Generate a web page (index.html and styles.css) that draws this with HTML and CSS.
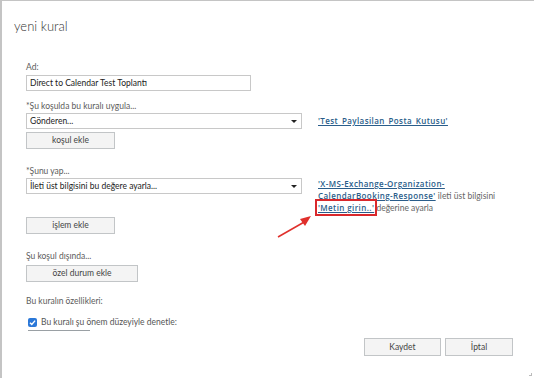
FILE: index.html
```html
<!DOCTYPE html>
<html lang="tr">
<head>
<meta charset="utf-8">
<link rel="stylesheet" href="styles.css">
</head>
<body>
<div class="dialog">
  <h1 class="title">yeni kural</h1>
  <div class="form">
    <div class="label l-ad">Ad:</div>
    <div class="input">Direct to Calendar Test Toplantı</div>

    <div class="label l-cond">*Şu koşulda bu kuralı uygula...</div>
    <div class="row">
      <div class="select"><span>Gönderen...</span><i class="caret"></i></div>
      <div class="side"><a class="link">'Test_Paylasilan_Posta_Kutusu'</a></div>
    </div>
    <div class="btn b-kosul">koşul ekle</div>

    <div class="label l-do">*Şunu yap...</div>
    <div class="row">
      <div class="select"><span>İleti üst bilgisini bu değere ayarla...</span><i class="caret"></i></div>
      <div class="side multi"><a class="link">'X-MS-Exchange-Organization-<br>CalendarBooking-Response'</a> ileti üst bilgisini <a class="link mark">'Metin girin..'</a> değerine ayarla</div>
    </div>
    <div class="btn b-islem">işlem ekle</div>

    <div class="label l-exc">Şu koşul dışında...</div>
    <div class="btn b-ozel">özel durum ekle</div>

    <div class="label l-prop">Bu kuralın özellikleri:</div>
    <div class="check-row">
      <span class="checkbox"><svg viewBox="0 0 10 10" width="9" height="9"><path d="M2.2 5.2 L4.2 7.1 L7.9 2.9" fill="none" stroke="#fff" stroke-width="1.6"/></svg></span>
      <span>Bu kuralı şu önem düzeyiyle denetle:</span>
    </div>
    <div class="cut-line"></div>
  </div>
  <div class="footer">
    <div class="btn b-foot">Kaydet</div>
    <div class="btn b-foot">İptal</div>
  </div>
  <svg class="arrow" width="40" height="26" viewBox="0 0 40 26">
    <line x1="2" y1="24" x2="30" y2="8" stroke="#e0302c" stroke-width="1.6"/>
    <polygon points="35,3 24,6 29,13" fill="#e0302c"/>
  </svg>
  <div class="grip"></div>
</div>
</body>
</html>
```

FILE: styles.css
```css
* { box-sizing: border-box; }
html, body { margin: 0; padding: 0; background: #fff; }
body {
  font-family: Lato, "Open Sans", sans-serif;
  font-size: 8.5px;
  color: #444;
}
.dialog {
  position: relative;
  width: 534px;
  height: 378px;
  border-top: 1px solid #c4c4c4;
  border-left: 2px solid #c4c4c4;
  display: flex;
  flex-direction: column;
  overflow: hidden;
}
.title {
  margin: 16px 0 0 12px;
  font-size: 13px;
  font-weight: 300;
  line-height: 18px;
  color: #333;
}
.form {
  margin-left: 24px;
  display: flex;
  flex-direction: column;
  align-items: flex-start;
}
.label {
  line-height: 12px;
  color: #5c5c5c;
  white-space: nowrap;
}
.l-ad { margin-top: 26px; }
.input {
  margin-top: 2px;
  width: 225px;
  height: 16px;
  border: 1px solid #c8c8c8;
  padding: 0 3px;
  line-height: 14px;
  color: #222;
}
.l-cond { margin-top: 9px; }
.row {
  display: flex;
  align-items: flex-start;
  margin-top: 1px;
}
.select {
  width: 276px;
  height: 16px;
  border: 1px solid #c8c8c8;
  padding: 0 3px;
  line-height: 14px;
  color: #222;
  display: flex;
  align-items: center;
  justify-content: space-between;
}
.caret {
  display: block;
  width: 0;
  height: 0;
  border-left: 3px solid transparent;
  border-right: 3px solid transparent;
  border-top: 3.5px solid #222;
  margin-right: 1px;
}
.side {
  margin-left: 16px;
  line-height: 16px;
  white-space: nowrap;
}
.side.multi {
  line-height: 11px;
  white-space: normal;
  width: 190px;
  color: #666;
}
.link {
  font-family: "Open Sans", sans-serif;
  font-size: 8px;
  color: #2a5d8a;
  text-decoration: underline;
  font-weight: 600;
  letter-spacing: 0.4px;
}
.mark {
  outline: 2px solid #d9282c;
  outline-offset: 1px;
}
.btn {
  height: 17px;
  border: 1px solid #c2c5c7;
  background: #f4f4f4;
  text-align: center;
  line-height: 15px;
  color: #444;
  white-space: nowrap;
}
.b-kosul { width: 89px; margin-top: 3px; }
.l-do { margin-top: 16px; }
.b-islem { width: 89px; margin-top: 3px; }
.l-exc { margin-top: 16px; }
.b-ozel { width: 112px; margin-top: 3px; }
.l-prop { margin-top: 13px; }
.check-row {
  display: flex;
  align-items: center;
  gap: 4px;
  margin-top: 9px;
  margin-left: 2px;
  line-height: 12px;
  color: #555;
}
.checkbox {
  width: 9px;
  height: 9px;
  border-radius: 2px;
  background: #2b78d8;
  display: flex;
  align-items: center;
  justify-content: center;
}
.cut-line {
  margin-top: 2px;
  margin-left: 2px;
  width: 62px;
  border-top: 1px solid #9aa0a4;
}
.footer {
  margin-top: auto;
  margin-bottom: 22px;
  margin-right: 21px;
  display: flex;
  justify-content: flex-end;
  gap: 4px;
}
.b-foot { width: 77px; height: 18px; line-height: 16px; }
.b-foot:last-child { width: 68px; }
.arrow {
  position: absolute;
  left: 274px;
  top: 212px;
}
.grip {
  position: absolute;
  right: 2px;
  bottom: 2px;
  width: 3px;
  height: 3px;
  border-right: 1px solid #bbb;
  border-bottom: 1px solid #bbb;
}
```
